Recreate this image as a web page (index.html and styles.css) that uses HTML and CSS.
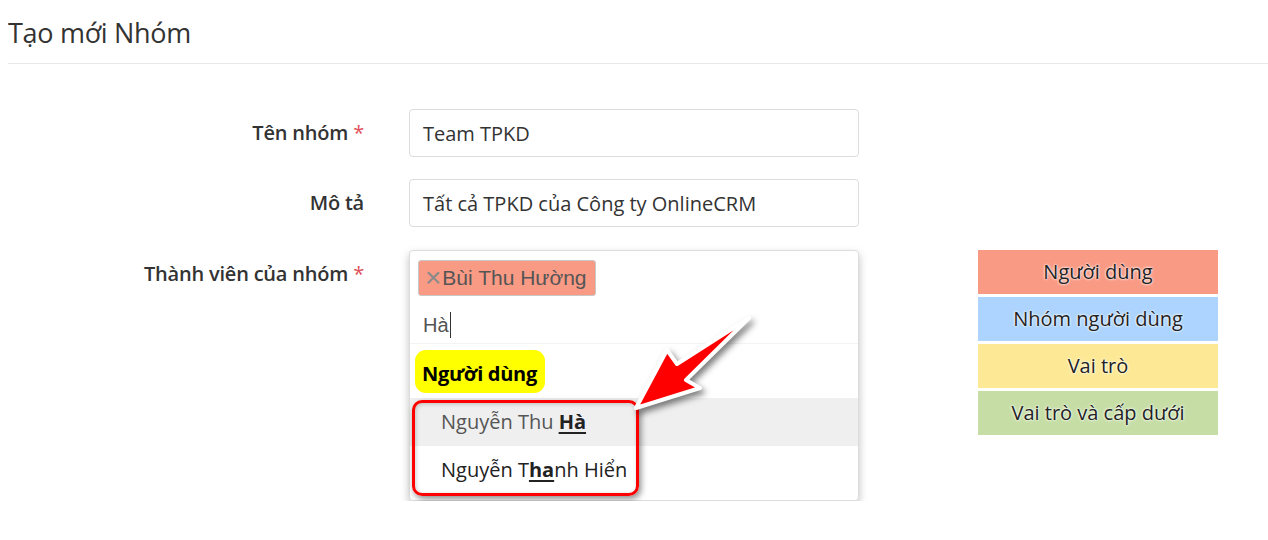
FILE: index.html
```html
<!DOCTYPE html>
<html lang="vi">
<head>
<meta charset="utf-8">
<link rel="stylesheet" href="styles.css">
</head>
<body>
<div class="page">
  <h1 class="title">Tạo mới Nhóm</h1>
  <div class="form">
    <div class="row">
      <label class="label">Tên nhóm <span class="req">*</span></label>
      <div class="input">Team TPKD</div>
    </div>
    <div class="row">
      <label class="label">Mô tả</label>
      <div class="input">Tất cả TPKD của Công ty OnlineCRM</div>
    </div>
    <div class="row row-members">
      <label class="label">Thành viên của nhóm <span class="req">*</span></label>
      <div class="select">
        <div class="select-top">
          <span class="tag"><span class="tag-x">×</span>Bùi Thu Hường</span>
          <div class="search">Hà<span class="caret"></span></div>
        </div>
        <div class="dropdown">
          <div class="group">Người dùng</div>
          <div class="option active">Nguyễn Thu <b>Hà</b></div>
          <div class="option">Nguyễn T<b>ha</b>nh Hiển</div>
          <div class="highlight"></div>
        </div>
        <svg class="arrow" width="160" height="130" viewBox="0 0 160 130">
          <polygon points="140,10 68,56 58,42 27,100 91,80 77,72" fill="#ff0000" stroke="#ffffff" stroke-width="4" stroke-linejoin="round"/>
        </svg>
      </div>
      <div class="legend">
        <div class="legend-item c-user">Người dùng</div>
        <div class="legend-item c-group">Nhóm người dùng</div>
        <div class="legend-item c-role">Vai trò</div>
        <div class="legend-item c-sub">Vai trò và cấp dưới</div>
      </div>
    </div>
  </div>
</div>
</body>
</html>
```

FILE: styles.css
```css
html, body {
  margin: 0;
  padding: 0;
  background: #ffffff;
}
body {
  font-family: "Open Sans", "Noto Sans", sans-serif;
  color: #333333;
}
.page {
  padding-left: 8px;
}
.title {
  margin: 0;
  padding-top: 14px;
  height: 49px;
  font-size: 27px;
  font-weight: 400;
  line-height: 38px;
  color: #333333;
  border-bottom: 1px solid #e8e8e8;
  letter-spacing: -0.3px;
}
.form {
  padding-top: 45px;
  display: flex;
  flex-direction: column;
  gap: 22px;
}
.row {
  display: grid;
  grid-template-columns: 356px 450px;
  column-gap: 45px;
  align-items: start;
}
.row-members {
  margin-top: 1px;
  column-gap: 0;
  grid-template-columns: 356px 45px 450px 119px 240px;
}
.row-members .label { grid-column: 1; }
.row-members .select { grid-column: 3; }
.row-members .legend { grid-column: 5; }
.label {
  text-align: right;
  font-size: 20px;
  font-weight: 600;
  line-height: 48px;
  color: #333333;
  letter-spacing: -0.2px;
}
.req {
  color: #e0505a;
  font-weight: 400;
}
.input {
  box-sizing: border-box;
  height: 48px;
  border: 1px solid #dddddd;
  border-radius: 4px;
  padding: 0 13px;
  font-size: 20px;
  line-height: 48px;
  color: #333333;
}
.select {
  position: relative;
  box-sizing: border-box;
  height: 251px;
  border: 1px solid #dddddd;
  border-radius: 4px;
  box-shadow: 0 4px 8px rgba(0,0,0,0.25);
  background: #ffffff;
}
.select-top {
  padding: 9px 8px 0 8px;
  height: 93px;
  box-sizing: border-box;
  border-bottom: 1px solid #f3f3f3;
}
.tag {
  display: inline-flex;
  align-items: center;
  box-sizing: border-box;
  height: 36px;
  padding: 0 8px 0 6px;
  background: #f99a85;
  border: 1px solid #c8c8c8;
  border-radius: 3px;
  font-family: "Liberation Sans", Arial, sans-serif;
  font-size: 21px;
  line-height: 34px;
  color: #555555;
}
.tag-x {
  font-size: 28px;
  line-height: 34px;
  color: #8a8a8a;
  margin-right: 1px;
}
.search {
  margin-top: 16px;
  padding-left: 5px;
  font-family: "Liberation Sans", Arial, sans-serif;
  font-size: 20px;
  line-height: 24px;
  color: #555555;
  display: flex;
  align-items: center;
}
.caret {
  display: inline-block;
  width: 1px;
  height: 26px;
  background: #333333;
  margin-left: 1px;
}
.dropdown {
  position: relative;
  padding-top: 6px;
}
.group {
  display: inline-block;
  margin-left: 5px;
  height: 43px;
  padding: 0 8px 0 7px;
  background: #ffff00;
  border-radius: 11px;
  font-size: 20px;
  font-weight: 700;
  line-height: 48px;
  color: #000000;
  letter-spacing: -0.3px;
}
.option {
  margin-top: 0;
  height: 48px;
  padding-left: 31px;
  font-size: 20px;
  line-height: 48px;
  color: #222222;
}
.group + .option { margin-top: 5px; }
.option.active {
  background: #efefef;
  color: #555555;
}
.option b {
  font-weight: 700;
  text-decoration: underline;
  text-underline-offset: 3px;
  text-decoration-thickness: 2px;
  color: #222222;
}
.highlight {
  position: absolute;
  left: 2px;
  top: 56px;
  width: 227px;
  height: 96px;
  box-sizing: border-box;
  border: 3px solid #ff0000;
  border-radius: 10px;
  box-shadow: 2px 3px 6px rgba(0,0,0,0.45), inset 1px 1px 4px rgba(0,0,0,0.2);
}
.arrow {
  position: absolute;
  left: 199px;
  top: 57px;
  filter: drop-shadow(3px 4px 3px rgba(0,0,0,0.5));
  overflow: visible;
}
.legend {
  display: flex;
  flex-direction: column;
  gap: 3px;
}
.legend-item {
  height: 44px;
  text-align: center;
  font-size: 20px;
  line-height: 44px;
  color: #222222;
  text-shadow: 0 0 3px #ffffff, 0 0 2px #ffffff;
}
.c-user { background: #f99a85; }
.c-group { background: #acd4fe; }
.c-role { background: #fde995; }
.c-sub { background: #c6dea6; }
```
